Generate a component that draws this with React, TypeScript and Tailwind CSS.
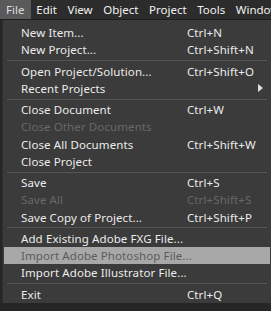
import React from 'react';

type Item =
  | { sep: true }
  | { label: string; shortcut?: string; disabled?: boolean; active?: boolean; submenu?: boolean; sep?: false };

const topMenus = ['File', 'Edit', 'View', 'Object', 'Project', 'Tools', 'Window'];

const items: Item[] = [
  { label: 'New Item...', shortcut: 'Ctrl+N' },
  { label: 'New Project...', shortcut: 'Ctrl+Shift+N' },
  { sep: true },
  { label: 'Open Project/Solution...', shortcut: 'Ctrl+Shift+O' },
  { label: 'Recent Projects', submenu: true },
  { sep: true },
  { label: 'Close Document', shortcut: 'Ctrl+W' },
  { label: 'Close Other Documents', disabled: true },
  { label: 'Close All Documents', shortcut: 'Ctrl+Shift+W' },
  { label: 'Close Project' },
  { sep: true },
  { label: 'Save', shortcut: 'Ctrl+S' },
  { label: 'Save All', shortcut: 'Ctrl+Shift+S', disabled: true },
  { label: 'Save Copy of Project...', shortcut: 'Ctrl+Shift+P' },
  { sep: true },
  { label: 'Add Existing Adobe FXG File...' },
  { label: 'Import Adobe Photoshop File...', active: true },
  { label: 'Import Adobe Illustrator File...' },
  { sep: true },
  { label: 'Exit', shortcut: 'Ctrl+Q' },
];

const App: React.FC = () => {
  return (
    <div
      className="w-[271px] h-[311px] overflow-hidden bg-[#262626] text-[11.5px] text-[#e8e8e8]"
      style={{ fontFamily: '"Noto Sans", "DejaVu Sans", sans-serif' }}
    >
      {/* menu bar */}
      <div className="h-[20px] flex items-stretch bg-[#2c2c2c] border-b border-[#1e1e1e] whitespace-nowrap overflow-hidden">
        {topMenus.map((m, i) => (
          <div
            key={m}
            className={`flex items-center shrink-0 leading-none ${
              i === 0 ? 'bg-[#5a5a5a] text-[#dcdcdc] w-[31px] px-[6px]' : 'px-[5.3px] text-[#f2f2f2]'
            }`}
          >
            {m}
          </div>
        ))}
      </div>

      {/* dropdown */}
      <div className="ml-[2px] w-[269px] h-[283px] bg-[#3b3b3b] border-l border-[#2f2f2f] pt-[4px] flex flex-col">
        {items.map((it, i) =>
          it.sep ? (
            <div key={i} className="h-[5px] flex items-center px-[4px]">
              <div className="h-px w-full bg-[#555555]" />
            </div>
          ) : (
            <div
              key={i}
              className={`h-[17.3px] flex items-center mx-[1px] pl-[17px] pr-[6px] whitespace-nowrap tracking-[0.1px] ${
                it.active ? 'bg-[#a8a8a8] text-[#5c5c5c]' : it.disabled ? 'text-[#686868]' : 'text-[#ececec]'
              }`}
            >
              <span className="w-[166px]">{it.label}</span>
              <span className="flex-1">{it.shortcut}</span>
              {it.submenu && (
                <svg width="5" height="8" viewBox="0 0 5 8" className="mr-[1px]">
                  <path d="M0 0 L5 4 L0 8 Z" fill="#e0e0e0" />
                </svg>
              )}
            </div>
          )
        )}
      </div>
    </div>
  );
};

export default App;
